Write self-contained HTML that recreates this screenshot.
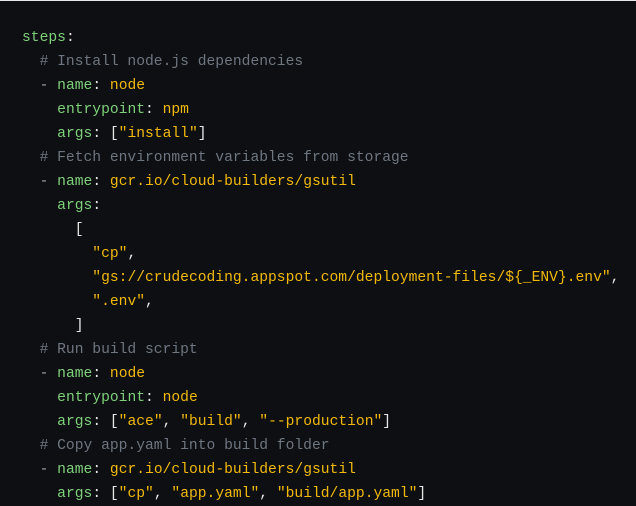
<!DOCTYPE html>
<html><head><meta charset="utf-8"><style>
html,body{margin:0;padding:0;background:#0d0f12;}
body{width:636px;height:503px;overflow:hidden;position:relative;border-top:1px solid #e8e8e8;box-sizing:border-box;}
pre{margin:0;position:absolute;left:22px;top:25px;font-family:"Liberation Mono",monospace;font-size:14.65px;line-height:24px;color:#e6e6e6;}
.k{color:#7fd07a}.v{color:#f2b90c}.c{color:#6e7681}.p{color:#e6e6e6}.d{color:#9aa0a6}
</style></head><body><pre><span class="k">steps</span><span class="p">:</span>
  <span class="c"># Install node.js dependencies</span>
  <span class="d">-</span> <span class="k">name</span>: <span class="v">node</span>
    <span class="k">entrypoint</span>: <span class="v">npm</span>
    <span class="k">args</span>: [<span class="v">"install"</span>]
  <span class="c"># Fetch environment variables from storage</span>
  <span class="d">-</span> <span class="k">name</span>: <span class="v">gcr.io/cloud-builders/gsutil</span>
    <span class="k">args</span>:
      [
        <span class="v">"cp"</span>,
        <span class="v">"gs://crudecoding.appspot.com/deployment-files/${_ENV}.env"</span>,
        <span class="v">".env"</span>,
      ]
  <span class="c"># Run build script</span>
  <span class="d">-</span> <span class="k">name</span>: <span class="v">node</span>
    <span class="k">entrypoint</span>: <span class="v">node</span>
    <span class="k">args</span>: [<span class="v">"ace"</span>, <span class="v">"build"</span>, <span class="v">"--production"</span>]
  <span class="c"># Copy app.yaml into build folder</span>
  <span class="d">-</span> <span class="k">name</span>: <span class="v">gcr.io/cloud-builders/gsutil</span>
    <span class="k">args</span>: [<span class="v">"cp"</span>, <span class="v">"app.yaml"</span>, <span class="v">"build/app.yaml"</span>]
</pre></body></html>
